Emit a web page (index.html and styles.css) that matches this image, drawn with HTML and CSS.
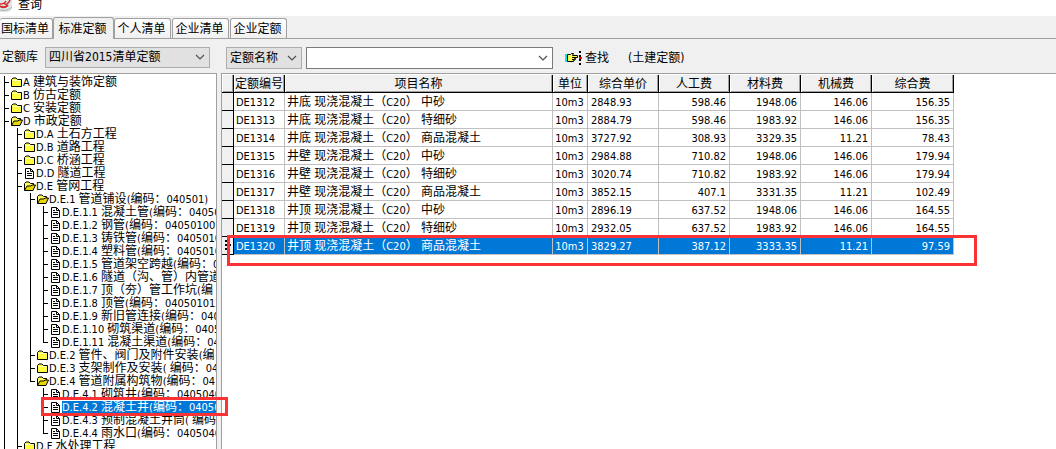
FILE: index.html
```html
<!DOCTYPE html>
<html lang="zh-CN">
<head>
<meta charset="utf-8">
<title>查询</title>
<link rel="stylesheet" href="styles.css">
</head>
<body>
<svg class="defs" aria-hidden="true">
  <symbol id="folder" viewBox="0 0 12 11"><path d="M.5 9.500V2.500L2 1h3l1.500 1.500h4v7z" fill="#ffff40" stroke="#000"/><path d="M1.500 3.500h8" stroke="#ffffc0"/></symbol>
  <symbol id="open" viewBox="0 0 12 11"><path d="M.5 9.500V2.500L2 1h3l1.500 1.500h3V5" fill="#ffff60" stroke="#000"/><path d="M.5 9.500 3 5h4l1-1h3.500L9 9.500z" fill="#e6d800" stroke="#000"/></symbol>
  <symbol id="doc" viewBox="0 0 12 11"><path d="M1.500.5h5l3 3v7h-8z" fill="#fff" stroke="#000"/><path d="M6.500.5v3h3M3 3.500h2M3 5.500h5M3 7.500h5" fill="none" stroke="#000"/></symbol>
  <symbol id="chevron" viewBox="0 0 10 10"><path d="M1 3l4 4 4-4" fill="none" stroke="#505050" stroke-width="1.200"/></symbol>
</svg>
<header class="title">
  <svg class="logo" viewBox="0 0 13 12" aria-hidden="true"><path d="M0 0h12v9l-3 3H0z" fill="#dfe5e6"/><path d="M0 4c3 0 5-1 6-3M4 3c1 2 4 2 6-3" fill="none" stroke="#d22b2b" stroke-width="1.500"/><path d="M0 6c3 2 6 1 8-1" fill="none" stroke="#d22b2b" stroke-width="2"/><path d="M0 10c5 1 9 0 12-3" fill="none" stroke="#9fb3ad"/></svg>
  <h1>查询</h1>
</header>
<nav class="tabs" role="tablist">
  <button class="tab first" role="tab">国标清单</button>
  <button class="tab active" role="tab" aria-selected="true">标准定额</button>
  <button class="tab" role="tab">个人清单</button>
  <button class="tab" role="tab">企业清单</button>
  <button class="tab" role="tab">企业定额</button>
</nav>
<main class="work">
  <section class="side">
    <div class="tools">
      <label for="lib">定额库</label>
      <span class="pick lib"><select id="lib"><option>四川省2015清单定额</option></select><svg class="chev"><use href="#chevron"/></svg></span>
    </div>
    <div class="tree">
      <ul>
        <li><div class="node"><svg><use href="#folder"/></svg>A <i>建筑与装饰定额</i></div></li>
        <li><div class="node"><svg><use href="#folder"/></svg>B <i>仿古定额</i></div></li>
        <li><div class="node"><svg><use href="#folder"/></svg>C <i>安装定额</i></div></li>
        <li class="more"><div class="node"><svg><use href="#open"/></svg>D <i>市政定额</i></div>
          <ul>
            <li><div class="node"><svg><use href="#folder"/></svg>D.A <i>土石方工程</i></div></li>
            <li><div class="node"><svg><use href="#folder"/></svg>D.B <i>道路工程</i></div></li>
            <li><div class="node"><svg><use href="#folder"/></svg>D.C <i>桥涵工程</i></div></li>
            <li><div class="node"><svg><use href="#doc"/></svg>D.D <i>隧道工程</i></div></li>
            <li><div class="node"><svg><use href="#open"/></svg>D.E <i>管网工程</i></div>
              <ul>
                <li><div class="node"><svg><use href="#open"/></svg>D.E.1 <i>管道铺设</i>(<i>编码：</i>040501)</div>
                  <ul>
                    <li><div class="node"><svg><use href="#doc"/></svg>D.E.1.1 <i>混凝土管</i>(<i>编码：</i>04050</div></li>
                    <li><div class="node"><svg><use href="#doc"/></svg>D.E.1.2 <i>钢管</i>(<i>编码：</i>040501001</div></li>
                    <li><div class="node"><svg><use href="#doc"/></svg>D.E.1.3 <i>铸铁管</i>(<i>编码：</i>0405010</div></li>
                    <li><div class="node"><svg><use href="#doc"/></svg>D.E.1.4 <i>塑料管</i>(<i>编码：</i>0405010</div></li>
                    <li><div class="node"><svg><use href="#doc"/></svg>D.E.1.5 <i>管道架空跨越</i>(<i>编码：</i>0</div></li>
                    <li><div class="node"><svg><use href="#doc"/></svg>D.E.1.6 <i>隧道（沟、管）内管道</i></div></li>
                    <li><div class="node"><svg><use href="#doc"/></svg>D.E.1.7 <i>顶（夯）管工作坑</i>(<i>编</i></div></li>
                    <li><div class="node"><svg><use href="#doc"/></svg>D.E.1.8 <i>顶管</i>(<i>编码：</i>040501012</div></li>
                    <li><div class="node"><svg><use href="#doc"/></svg>D.E.1.9 <i>新旧管连接</i>(<i>编码：</i>040</div></li>
                    <li><div class="node"><svg><use href="#doc"/></svg>D.E.1.10 <i>砌筑渠道</i>(<i>编码：</i>0405</div></li>
                    <li><div class="node"><svg><use href="#doc"/></svg>D.E.1.11 <i>混凝土渠道</i>(<i>编码：</i>04</div></li>
                  </ul>
                </li>
                <li><div class="node"><svg><use href="#folder"/></svg>D.E.2 <i>管件、阀门及附件安装</i>(<i>编</i></div></li>
                <li><div class="node"><svg><use href="#folder"/></svg>D.E.3 <i>支架制作及安装</i>( <i>编码：</i>04</div></li>
                <li><div class="node"><svg><use href="#open"/></svg>D.E.4 <i>管道附属构筑物</i>(<i>编码：</i>04</div>
                  <ul>
                    <li><div class="node"><svg><use href="#doc"/></svg>D.E.4.1 <i>砌筑井</i>(<i>编码：</i>0405040</div></li>
                    <li><div class="node"><svg><use href="#doc"/></svg><span class="sel">D.E.4.2 <i>混凝土井</i>(<i>编码：</i>04050</span></div></li>
                    <li><div class="node"><svg><use href="#doc"/></svg>D.E.4.3 <i>预制混凝土井筒</i>( <i>编码</i></div></li>
                    <li><div class="node"><svg><use href="#doc"/></svg>D.E.4.4 <i>雨水口</i>(<i>编码：</i>0405040</div></li>
                  </ul>
                </li>
              </ul>
            </li>
            <li class="more"><div class="node"><svg><use href="#folder"/></svg>D.F <i>水处理工程</i></div></li>
          </ul>
        </li>
      </ul>
    </div>
    <div class="mark mark-tree"></div>
  </section>
  <section class="content">
    <div class="tools">
      <span class="pick field"><select aria-label="查询字段"><option>定额名称</option></select><svg class="chev"><use href="#chevron"/></svg></span>
      <span class="pick query"><input type="text" aria-label="查询内容"><svg class="chev"><use href="#chevron"/></svg></span>
      <button class="find"><svg viewBox="0 0 18 14" aria-hidden="true"><path d="M0 3h3v8H0z" fill="#00e8f0"/><path d="M2.500 3.500h3l1-1h2l-1 2h5v2h-3v1h1v1h-1v1h-1v1h-6z" fill="#ffff50" stroke="#000"/><path d="M7 6.500h3M7 8.500h2" stroke="#000"/><path d="M15 0v14" stroke="#000" stroke-width="2" stroke-dasharray="2 2"/><path d="M14 6h3v2h-3z" fill="#f00"/></svg>查找</button>
      <span>(土建定额)</span>
    </div>
    <div class="grid">
      <table>
        <colgroup><col class="c-ind"><col class="c-id"><col class="c-name"><col class="c-unit"><col class="c-num"><col class="c-num"><col class="c-num"><col class="c-num"><col class="c-last"></colgroup>
        <thead><tr><th></th><th>定额编号</th><th>项目名称</th><th>单位</th><th>综合单价</th><th>人工费</th><th>材料费</th><th>机械费</th><th>综合费</th></tr></thead>
        <tbody>
          <tr><th></th><td>DE1312</td><td><i>井底</i> <i>现浇混凝土（</i>C20<i>）</i> <i>中砂</i></td><td>10m3</td><td>2848.93</td><td class="n">598.46</td><td class="n">1948.06</td><td class="n">146.06</td><td class="n">156.35</td></tr>
          <tr><th></th><td>DE1313</td><td><i>井底</i> <i>现浇混凝土（</i>C20<i>）</i> <i>特细砂</i></td><td>10m3</td><td>2884.79</td><td class="n">598.46</td><td class="n">1983.92</td><td class="n">146.06</td><td class="n">156.35</td></tr>
          <tr><th></th><td>DE1314</td><td><i>井底</i> <i>现浇混凝土（</i>C20<i>）</i> <i>商品混凝土</i></td><td>10m3</td><td>3727.92</td><td class="n">308.93</td><td class="n">3329.35</td><td class="n">11.21</td><td class="n">78.43</td></tr>
          <tr><th></th><td>DE1315</td><td><i>井壁</i> <i>现浇混凝土（</i>C20<i>）</i> <i>中砂</i></td><td>10m3</td><td>2984.88</td><td class="n">710.82</td><td class="n">1948.06</td><td class="n">146.06</td><td class="n">179.94</td></tr>
          <tr><th></th><td>DE1316</td><td><i>井壁</i> <i>现浇混凝土（</i>C20<i>）</i> <i>特细砂</i></td><td>10m3</td><td>3020.74</td><td class="n">710.82</td><td class="n">1983.92</td><td class="n">146.06</td><td class="n">179.94</td></tr>
          <tr><th></th><td>DE1317</td><td><i>井壁</i> <i>现浇混凝土（</i>C20<i>）</i> <i>商品混凝土</i></td><td>10m3</td><td>3852.15</td><td class="n">407.1</td><td class="n">3331.35</td><td class="n">11.21</td><td class="n">102.49</td></tr>
          <tr><th></th><td>DE1318</td><td><i>井顶</i> <i>现浇混凝土（</i>C20<i>）</i> <i>中砂</i></td><td>10m3</td><td>2896.19</td><td class="n">637.52</td><td class="n">1948.06</td><td class="n">146.06</td><td class="n">164.55</td></tr>
          <tr><th></th><td>DE1319</td><td><i>井顶</i> <i>现浇混凝土（</i>C20<i>）</i> <i>特细砂</i></td><td>10m3</td><td>2932.05</td><td class="n">637.52</td><td class="n">1983.92</td><td class="n">146.06</td><td class="n">164.55</td></tr>
          <tr class="current"><th><svg viewBox="0 0 11 17" aria-hidden="true"><path d="M3 3h2v2H3zM5 5h2v2H5zM3 7h3v2H3zM7 7h2v2H7zM5 9h2v2H5zM3 11h2v2H3z"/></svg></th><td>DE1320</td><td><i>井顶</i> <i>现浇混凝土（</i>C20<i>）</i> <i>商品混凝土</i></td><td>10m3</td><td>3829.27</td><td class="n">387.12</td><td class="n">3333.35</td><td class="n">11.21</td><td class="n">97.59</td></tr>
        </tbody>
      </table>
      <div class="mark mark-row"></div>
    </div>
  </section>
</main>
</body>
</html>
```
FILE: styles.css
```css
* { box-sizing: border-box; }
html, body { height: 100%; }
body {
  margin: 0;
  display: flex;
  flex-direction: column;
  overflow: hidden;
  background: #f0f0f0;
  color: #000;
  font: 12px/16px "DejaVu Sans Condensed", "Noto Sans CJK SC", sans-serif;
}
button, select, input { font: inherit; color: inherit; margin: 0; border-radius: 0; }
i { font-style: normal; font-size: 12px; }
.defs { display: none; }

.title { display: flex; gap: 5px; height: 16px; flex: none; background: #fff; }
.title h1 { margin: 0; font-size: 12px; font-weight: 400; line-height: 10px; }
.logo { width: 13px; height: 12px; }

.tabs {
  display: flex;
  align-items: flex-end;
  gap: 1px;
  height: 23px;
  flex: none;
  border-bottom: 1px solid #a0a0a0;
}
.tab {
  height: 20px;
  width: 57px;
  padding: 0 2px 0 0;
  background: linear-gradient(#fff, #f0f0f0);
  border: 1px solid #a0a0a0;
  border-bottom: 0;
  border-radius: 3px 3px 0 0;
  white-space: nowrap;
}
.tab.first { width: 53px; border-left: 0; margin-right: -1px; }
.tab.active { width: 61px; height: 22px; margin-bottom: -1px; margin-right: -1px; background: #f0f0f0; }

.work { display: flex; flex: 1; min-height: 0; }
.side { position: relative; display: flex; flex-direction: column; width: 217px; flex: none; }
.content { display: flex; flex-direction: column; flex: 1; min-width: 0; margin-left: 4px; }
.tools { display: flex; align-items: center; height: 34px; flex: none; padding-top: 2px; white-space: nowrap; }
.side .tools { padding-left: 2px; gap: 7px; }
.content .tools { padding-left: 5px; gap: 4px; padding-top: 3px; }

.pick { display: grid; grid-template-columns: 1fr 20px; height: 22px; }
.pick > select, .pick > input { grid-area: 1 / 1 / 2 / 3; width: 100%; height: 22px; }
.pick select { appearance: none; padding: 0 3px; border: 1px solid #adadad; background: #e1e1e1; }
.pick input { border: 1px solid #7a7a7a; background: #fff; padding: 0 20px 0 4px; }
.chev { grid-area: 1 / 2; width: 10px; height: 10px; place-self: center; pointer-events: none; z-index: 1; }
.lib { width: 165px; }
.side .pick, .side .pick select { height: 21px; }
.field { width: 76px; }
.query { width: 247px; }
.find { display: flex; align-items: center; gap: 2px; margin: 0 15px 0 8px; padding: 0; border: 0; background: none; }
.find svg { width: 18px; height: 14px; }

.tree {
  flex: 1;
  min-height: 0;
  overflow: hidden;
  padding: 2px 0 0 4px;
  background: #fff;
  border-top: 1px solid #a0a0a0;
  border-right: 1px solid #a0a0a0;
  font-size: 11px;
}
.tree ul { list-style: none; margin: 0; padding: 0; }
.tree li ul { margin-left: 13px; }
.tree li { background: linear-gradient(#000, #000) 0 0 / 1px 100% no-repeat; }
.tree li:last-child { background-size: 1px 7px; }
.tree li.more { background-size: 1px 100%; }
.node { display: flex; align-items: center; height: 13px; line-height: 13px; white-space: pre; }
.node::before { content: ""; width: 5px; height: 1px; flex: none; background: #000; }
.node svg { width: 12px; height: 11px; flex: none; margin: 0 0 0 2px; }
.sel { flex: 1; background: #0078d7; color: #fff; }

.grid { position: relative; flex: 1; background: #fff; border-top: 1px solid #a0a0a0; border-left: 1px solid #a0a0a0; padding-top: 1px; }
table { table-layout: fixed; width: 732px; border-collapse: separate; border-spacing: 0; font-size: 11px; }
.c-ind { width: 12px; }
.c-id { width: 51px; }
.c-name { width: 268px; }
.c-unit { width: 35px; }
.c-num { width: 71px; }
.c-last { width: 82px; }
th, td { height: 18px; line-height: 16px; white-space: nowrap; overflow: hidden; }
th { padding: 0; background: #f0f0f0; border-right: 1px solid #000; border-bottom: 1px solid #000; font-weight: 400; font-size: 12px; }
thead th { box-shadow: inset 1px 0 #fff, inset -1px -1px #a0a0a0; }
td { padding: 2px 3px 0 2px; line-height: 14px; border-right: 1px solid #c0c0c0; border-bottom: 1px solid #c0c0c0; }
td:nth-child(4) { text-align: center; }
td:nth-child(5) { padding-left: 3px; }
.n { text-align: right; }
.current td { background: #0078d7; color: #fff; }
th svg { display: block; width: 11px; height: 17px; }

.mark { position: absolute; border: 3px solid #fa3236; pointer-events: none; }
.mark-tree { left: 41px; top: 358px; width: 187px; height: 19px; z-index: 2; }
.mark-row { left: 5px; top: 161px; width: 750px; height: 31px; }
```
